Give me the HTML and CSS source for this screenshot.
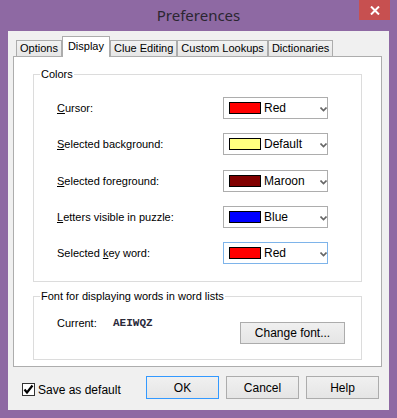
FILE: index.html
```html
<!DOCTYPE html>
<html lang="en">

<head>
  <meta charset="UTF-8">
  <title>Preferences</title>
  <link rel="stylesheet" href="styles.css">
</head>

<body>

  <!-- dialog window -->
  <div class="window">

    <!-- title bar -->
    <div class="titlebar">
      <span></span>
      <span class="title">Preferences</span>
      <span class="close">
        <svg width="10" height="9" viewBox="0 0 10 9">
          <path d="M1 0.5 L9 8.5 M9 0.5 L1 8.5" stroke="#fff" stroke-width="2" fill="none" />
        </svg>
      </span>
    </div>

    <div class="client">

      <!-- tabs -->
      <div class="tabs">
        <div class="tab">Options</div>
        <div class="tab active">Display</div>
        <div class="tab">Clue Editing</div>
        <div class="tab">Custom Lookups</div>
        <div class="tab">Dictionaries</div>
      </div>

      <div class="panel">

        <!-- colors group -->
        <fieldset class="group colors">
          <legend>Colors</legend>

          <div class="row">
            <span class="label"><u>C</u>ursor:</span>
            <div class="combo">
              <span class="swatch" style="background:#ff0000"></span>
              <span class="combo-text">Red</span>
              <svg class="arrow" width="7" height="5" viewBox="0 0 7 5"><path d="M0.5 0.5 L3.5 3.5 L6.5 0.5" stroke="#666" stroke-width="1.6" fill="none" /></svg>
            </div>
          </div>

          <div class="row">
            <span class="label"><u>S</u>elected background:</span>
            <div class="combo">
              <span class="swatch" style="background:#ffff80"></span>
              <span class="combo-text">Default</span>
              <svg class="arrow" width="7" height="5" viewBox="0 0 7 5"><path d="M0.5 0.5 L3.5 3.5 L6.5 0.5" stroke="#666" stroke-width="1.6" fill="none" /></svg>
            </div>
          </div>

          <div class="row">
            <span class="label"><u>S</u>elected foreground:</span>
            <div class="combo">
              <span class="swatch" style="background:#800000"></span>
              <span class="combo-text">Maroon</span>
              <svg class="arrow" width="7" height="5" viewBox="0 0 7 5"><path d="M0.5 0.5 L3.5 3.5 L6.5 0.5" stroke="#666" stroke-width="1.6" fill="none" /></svg>
            </div>
          </div>

          <div class="row">
            <span class="label"><u>L</u>etters visible in puzzle:</span>
            <div class="combo">
              <span class="swatch" style="background:#0000ff"></span>
              <span class="combo-text">Blue</span>
              <svg class="arrow" width="7" height="5" viewBox="0 0 7 5"><path d="M0.5 0.5 L3.5 3.5 L6.5 0.5" stroke="#666" stroke-width="1.6" fill="none" /></svg>
            </div>
          </div>

          <div class="row">
            <span class="label">Selected <u>k</u>ey word:</span>
            <div class="combo focused">
              <span class="swatch" style="background:#ff0000"></span>
              <span class="combo-text">Red</span>
              <svg class="arrow" width="7" height="5" viewBox="0 0 7 5"><path d="M0.5 0.5 L3.5 3.5 L6.5 0.5" stroke="#666" stroke-width="1.6" fill="none" /></svg>
            </div>
          </div>
        </fieldset>

        <!-- font group -->
        <fieldset class="group font">
          <legend>Font for displaying words in word lists</legend>
          <div class="font-row">
            <span class="current">Current:</span>
            <span class="sample">AEIWQZ</span>
            <button class="btn change">Change font...</button>
          </div>
        </fieldset>
      </div>

      <!-- bottom buttons -->
      <div class="footer">
        <label class="check">
          <span class="box">
            <svg width="11" height="11" viewBox="0 0 11 11"><path d="M1.5 5.5 L4 8.5 L9.5 1.5" stroke="#000" stroke-width="2.2" fill="none" /></svg>
          </span>
          Save as default
        </label>
        <div class="buttons">
          <button class="btn default">OK</button>
          <button class="btn">Cancel</button>
          <button class="btn">Help</button>
        </div>
      </div>
    </div>
  </div>

</body>

</html>
```

FILE: styles.css
```css
/* page */
body {
  margin: 0;
  font-family: "Liberation Sans", Arial, sans-serif;
  font-size: 11px;
  color: #000;
}

.window {
  width: 397px;
  height: 418px;
  background-color: #8e69a3;
  display: flex;
  flex-direction: column;
}

/* title bar */
.titlebar {
  height: 31px;
  display: grid;
  grid-template-columns: 1fr auto 1fr;
}

.title {
  font-family: "Noto Sans", sans-serif;
  font-size: 15px;
  line-height: 20px;
  padding-top: 5px;
  color: #2b2631;
}

.close {
  justify-self: end;
  width: 31px;
  height: 20px;
  margin-right: 7px;
  background-color: #c75050;
  display: flex;
  align-items: center;
  justify-content: center;
}

/* client area */
.client {
  flex: 1;
  margin: 0 8px 8px;
  background-color: #f0f0f0;
  padding: 5px 7px 0 5px;
  display: flex;
  flex-direction: column;
}

/* tabs */
.tabs {
  display: flex;
  height: 21px;
  margin-bottom: -1px;
  padding-left: 3px;
  position: relative;
  z-index: 1;
}

.tab {
  margin-top: 4px;
  height: 16px;
  line-height: 15px;
  padding: 0 3px;
  border: 1px solid #acacac;
  border-bottom: none;
  background: linear-gradient(#f2f2f2, #e6e6e6);
  box-sizing: border-box;
}

.tab.active {
  margin-top: 0;
  height: 21px;
  line-height: 18px;
  padding: 0 5px;
  background: #fff;
}

.panel {
  height: 311px;
  box-sizing: border-box;
  background-color: #fff;
  border: 1px solid #adadad;
  padding: 11px 19px 0 19px;
}

/* group boxes */
.group {
  margin: 0;
  border: 1px solid #dcdcdc;
  padding: 16px 0 17px 23px;
  min-width: 0;
}

.group legend {
  margin-left: -17px;
  padding: 0 1px;
  line-height: 13px;
}

.group.font {
  margin-top: 8px;
  padding: 14px 16px 15px 23px;
}

.row {
  display: flex;
  align-items: center;
  height: 22px;
  margin-bottom: 14px;
}

.row:nth-child(3) {
  margin-bottom: 15px;
}

.row:last-child {
  margin-bottom: 0;
}

.label {
  width: 166px;
}

/* colour combo */
.combo {
  width: 105px;
  height: 22px;
  box-sizing: border-box;
  border: 1px solid #adadad;
  display: flex;
  align-items: center;
  padding-left: 5px;
}

.combo.focused {
  border-color: #7eb4ea;
}

.swatch {
  width: 32px;
  height: 12px;
  box-sizing: border-box;
  border: 1px solid #000;
}

.combo-text {
  margin-left: 3px;
  font-size: 12px;
  flex: 1;
}

.arrow {
  margin-top: 2px;
}

/* font row */
.font-row {
  display: flex;
  align-items: flex-start;
  line-height: 13px;
}

.current {
  width: 56px;
}

.sample {
  font-family: "Liberation Mono", "Courier New", monospace;
  font-weight: bold;
  font-size: 11px;
  color: #2a2a3a;
}

/* buttons */
.btn {
  font-family: "Liberation Sans", Arial, sans-serif;
  font-size: 12px;
  width: 73px;
  height: 23px;
  border: 1px solid #acacac;
  background: linear-gradient(#f0f0f0, #e5e5e5);
  color: #000;
  padding: 0;
}

.btn.change {
  width: 105px;
  height: 22px;
  margin-left: auto;
  margin-top: 5px;
}

.btn.default {
  border-color: #3399ff;
}

.footer {
  display: flex;
  align-items: center;
  margin-top: 9px;
  padding: 0 3px 0 9px;
}

.check {
  display: flex;
  align-items: center;
  font-size: 12px;
  margin-top: 4px;
}

.box {
  width: 13px;
  height: 13px;
  box-sizing: border-box;
  border: 1px solid #333;
  background: #fff;
  margin-right: 3px;
  display: flex;
  align-items: center;
  justify-content: center;
}

.buttons {
  margin-left: auto;
  display: flex;
  gap: 7px;
}
```
